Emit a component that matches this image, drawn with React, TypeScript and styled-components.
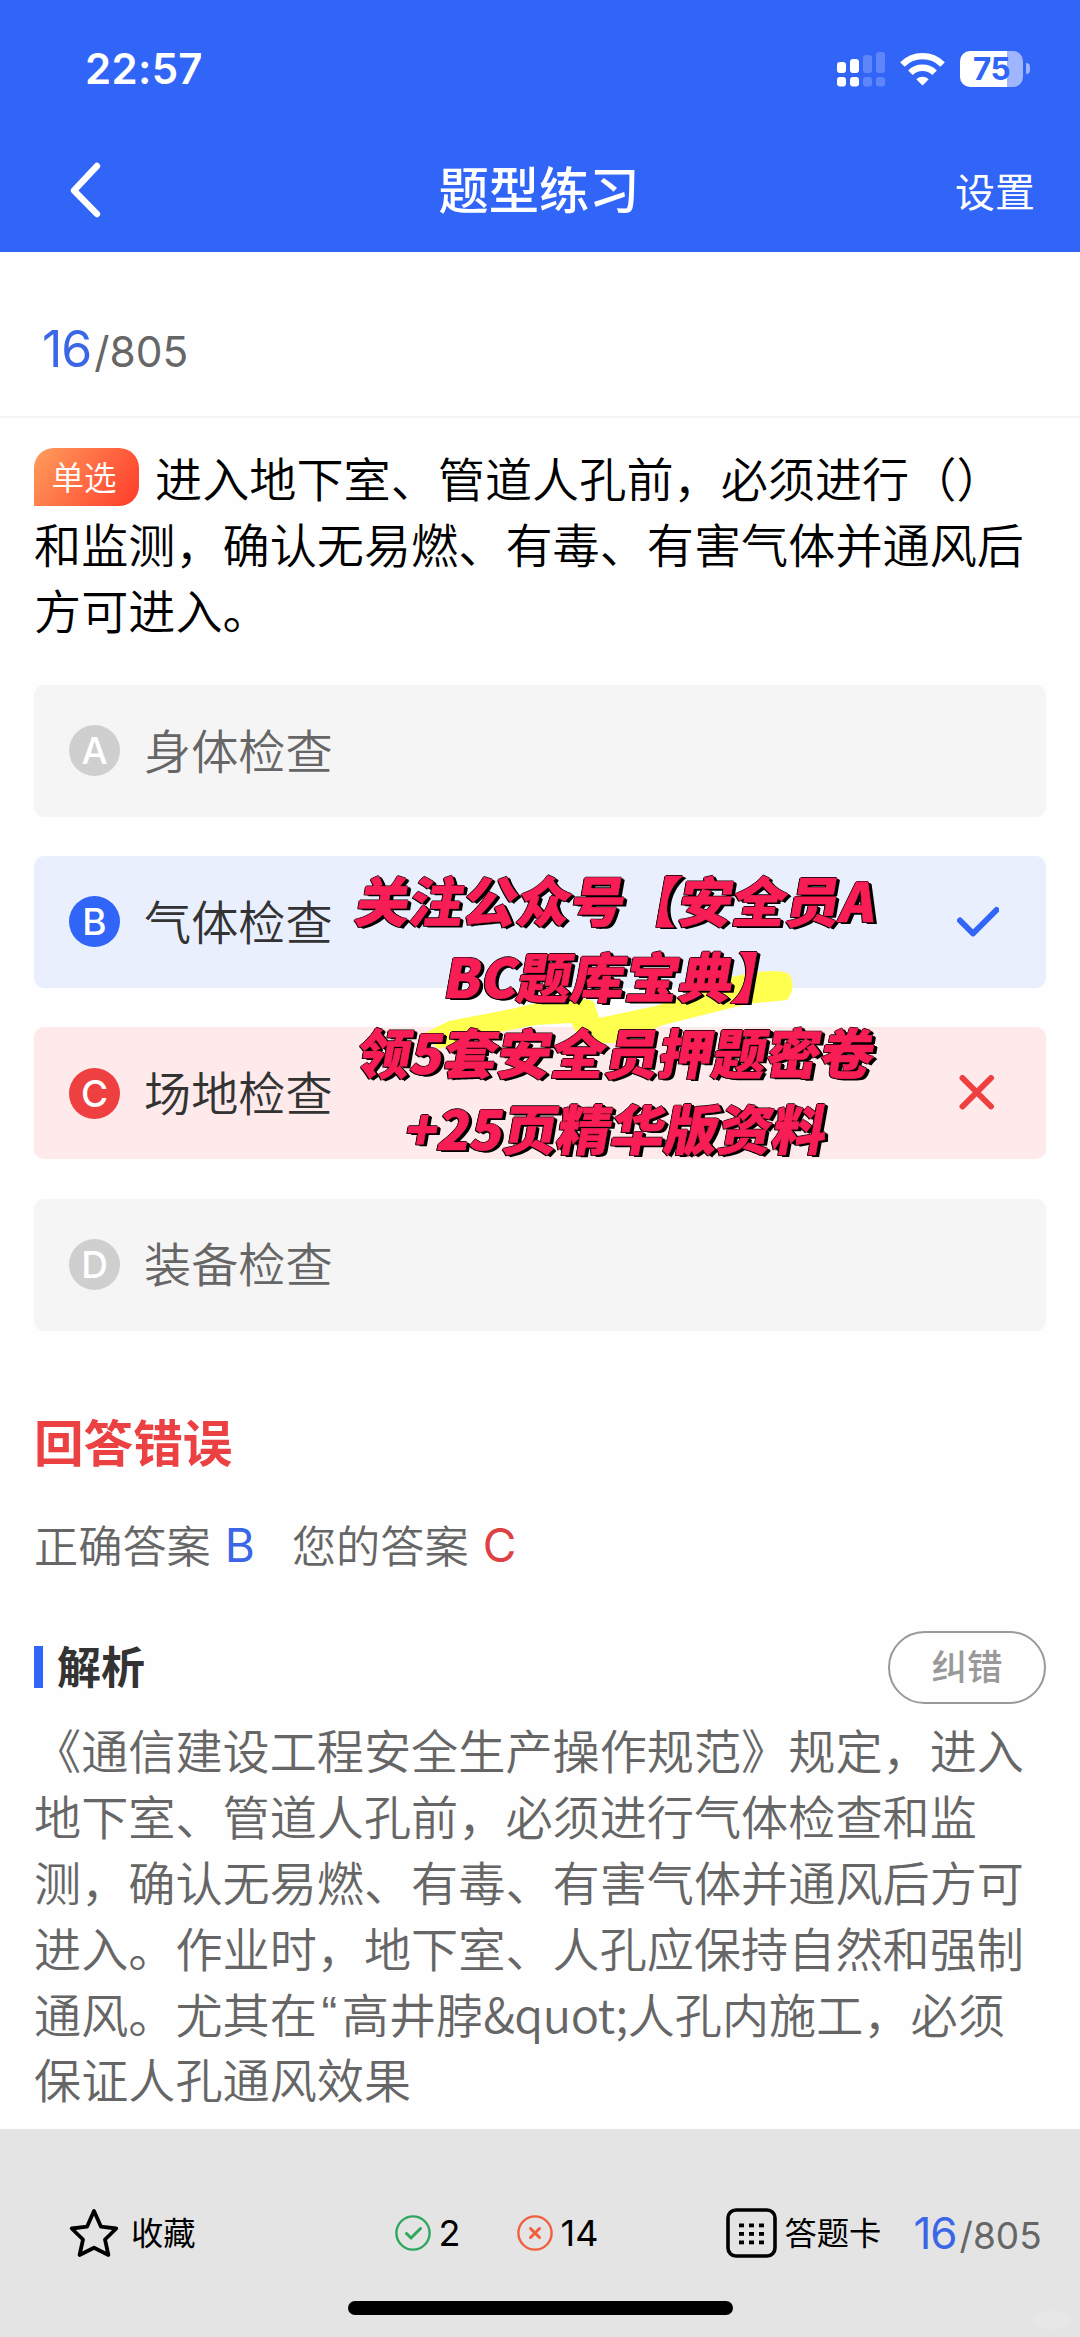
import React from 'react';
import styled, { createGlobalStyle, css } from 'styled-components';

const latin = `Inter, "Noto Sans CJK SC", sans-serif`;
const cjk = `"Noto Sans CJK SC", sans-serif`;
const blue = '#3165f7';
const red = '#ee3f41';

const GlobalStyle = createGlobalStyle`
  *, *::before, *::after { box-sizing: border-box; }
  body { margin: 0; background: #fff; }
  button { font: inherit; background: none; border: 0; padding: 0; color: inherit; }
  svg { display: block; flex: none; }
`;

const Screen = styled.div`
  width: 1080px;
  height: 2337px;
  display: flex;
  flex-direction: column;
  overflow: hidden;
  background: #fefefe;
  font-family: ${cjk};
  color: #000;
`;

const Header = styled.header`
  height: 252px;
  flex: none;
  background: ${blue};
  color: #fff;
`;

const StatusBar = styled.div`
  height: 137px;
  padding: 0 50px 0 85px;
  display: flex;
  align-items: center;
  justify-content: space-between;
`;

const Clock = styled.span`
  font: 600 42px/1 ${latin};
  letter-spacing: 0.3px;
`;

const StatusIcons = styled.div`
  display: flex;
  align-items: center;
  gap: 15px;
`;

const BatteryWrap = styled.div`
  display: flex;
  align-items: center;
  gap: 3px;
`;

const Battery = styled.div`
  width: 63px;
  height: 36px;
  border-radius: 10px;
  display: flex;
  align-items: center;
  justify-content: center;
  background: linear-gradient(to right, #fff 75%, #9fb5fd 75%);
  color: ${blue};
  font: 700 31.5px/1 ${latin};
  letter-spacing: -0.5px;
`;

const BatteryNub = styled.i`
  width: 4px;
  height: 11px;
  border-radius: 0 5px 5px 0;
  background: #9fb5fd;
`;

const NavBar = styled.nav`
  height: 106px;
  padding: 0 45px 0 70px;
  display: grid;
  grid-template-columns: 1fr auto 1fr;
  align-items: center;
`;

const NavTitle = styled.h1`
  margin: 0 27px 6px 0;
  font: 500 50.3px/1 ${cjk};
`;

const NavAction = styled.button`
  justify-self: end;
  font: 400 40px/1 ${cjk};
`;

const Counter = styled.div<{ $big: number; $small: number }>`
  display: flex;
  align-items: baseline;
  gap: 3px;
  font: 400 ${p => p.$small}px/1 ${latin};
  color: #666;
  b {
    font-weight: 400;
    font-size: ${p => p.$big}px;
    letter-spacing: -1px;
    color: #3b66e6;
  }
`;

const ProgressRow = styled.div`
  height: 166px;
  flex: none;
  padding: 72px 42px 0;
  border-bottom: 2px solid #f4f4f4;
`;

const Main = styled.main`
  flex: 1;
  padding: 26px 34px 0;
`;

const Line = styled.span`
  display: flex;
  align-items: center;
  height: 65.9px;
  white-space: nowrap;
`;

const Question = styled.p`
  margin: 0;
  font-size: 47.15px;
  font-weight: 350;
`;

const TypeBadge = styled.span`
  width: 105px;
  height: 58px;
  margin-right: 16px;
  padding: 0 5px 2px 0;
  display: flex;
  align-items: center;
  justify-content: center;
  border-radius: 20px 20px 20px 0;
  background: linear-gradient(125deg, #ff9d5c, #ff452f 90%);
  color: #fff;
  font-size: 32.5px;
`;

const Options = styled.div`
  position: relative;
  margin-top: 43px;
  display: flex;
  flex-direction: column;
  gap: 39.3px;
`;

type State = 'idle' | 'right' | 'wrong';
const cardBg = { idle: '#f5f5f5', right: '#eaeffe', wrong: '#feeaea' };
const dotBg = { idle: '#d0cfd0', right: blue, wrong: red };

const OptionCard = styled.div<{ $state: State }>`
  height: 132px;
  padding: 0 47px 0 35px;
  border-radius: 10px;
  display: flex;
  align-items: center;
  background: ${p => cardBg[p.$state]};
  color: ${p => (p.$state === 'idle' ? '#666' : '#333')};
  font-size: 47.15px;
  font-weight: 350;
  line-height: 1;
`;

const Letter = styled.span<{ $state: State }>`
  width: 51px;
  height: 51px;
  margin-right: 24px;
  border-radius: 50%;
  display: flex;
  align-items: center;
  justify-content: center;
  background: ${p => dotBg[p.$state]};
  color: #fff;
  font: 500 37px/1 ${latin};
`;

const OptionText = styled.span`
  flex: 1;
  padding-bottom: 5px;
`;

const Promo = styled.div`
  position: absolute;
  left: 303px;
  top: 176px;
  width: 560px;
  color: #f81e55;
  text-align: center;
`;

const Highlight = styled.svg`
  position: absolute;
  left: 86px;
  top: 106px;
`;

const PromoLine = styled.div`
  position: relative;
  height: 76px;
  white-space: nowrap;
  font: 900 53.8px/76px ${cjk};
  transform: skewX(-10deg);
  -webkit-text-stroke: 0.6px #f81e55;
  text-shadow: -1px 0 0 #000, 0 -1px 0 #000, 0 1px 0 #000, 1px 0 0 #000,
    -1px 1px 0 #000, 2px 1px 0 #000, 3px 1px 0 #000, 4px 2px 0 #000;
`;

const Verdict = styled.h2`
  margin: 80px 0 0 0;
  font: 700 49.6px/58px ${cjk};
  color: #eb4143;
`;

const Answers = styled.div`
  height: 60px;
  margin-top: 45px;
  display: flex;
  align-items: center;
  font-size: 44.2px;
  font-weight: 350;
  color: #666;
`;

const Answer = styled.span<{ $color: string }>`
  display: flex;
  align-items: center;
  margin-right: 37px;
  em {
    margin-left: 14px;
    padding-top: 2px;
    font: 400 46px/1 ${latin};
    color: ${p => p.$color};
  }
`;

const SectionHead = styled.div`
  height: 73px;
  margin-top: 57px;
  display: flex;
  align-items: center;
  justify-content: space-between;
`;

const SectionTitle = styled.h3`
  margin: 0;
  display: flex;
  align-items: center;
  gap: 14px;
  font: 600 44px/1 ${cjk};
  color: #333;
  &::before {
    content: '';
    width: 9px;
    height: 42px;
    background: ${blue};
  }
  span {
    padding-bottom: 4px;
  }
`;

const ReportButton = styled.button`
  width: 158px;
  height: 73px;
  padding-bottom: 4px;
  border: 2.6px solid #999;
  border-radius: 37px;
  font: 500 35.5px/1 ${cjk};
  color: #999;
`;

const Explanation = styled.p`
  margin: 12px 0 0;
  font-size: 47.15px;
  font-weight: 350;
  color: #666;
`;

const Quote = styled.span`
  width: 25px;
  text-align: center;
  font-family: "Liberation Sans", sans-serif;
`;

const Entity = styled.span`
  letter-spacing: -0.5px;
`;

const Footer = styled.footer`
  position: relative;
  height: 208px;
  flex: none;
  padding: 66px 38px 0 69px;
  background: #e4e4e4;
`;

const FooterRow = styled.div`
  height: 76px;
  display: flex;
  align-items: center;
  white-space: nowrap;
`;

const FooterItem = styled.div<{ $gap: number; $after: number; $num?: boolean }>`
  flex: none;
  display: flex;
  align-items: center;
  gap: ${p => p.$gap}px;
  margin-right: ${p => p.$after}px;
  line-height: 1;
  ${p =>
    p.$num
      ? css`
          font-family: ${latin};
          font-size: 36px;
        `
      : css`
          font-size: 32.3px;
        `}
`;

const FooterLabel = styled.span`
  padding-bottom: 3px;
`;

const HomeIndicator = styled.i`
  position: absolute;
  left: 348px;
  bottom: 22px;
  width: 385px;
  height: 14px;
  border-radius: 7px;
  background: #000;
`;

const Stamp = styled.i`
  position: absolute;
  right: 9px;
  bottom: 8px;
  width: 37px;
  height: 18px;
  border-radius: 9px;
  background: #e7e7e7;
`;

const Signal = () => (
  <svg width="48" height="36" viewBox="0 0 48 36" fill="#fff">
    <rect x="0" y="11" width="9" height="11" rx="3" />
    <rect x="13" y="8" width="9" height="14" rx="3" />
    <rect x="26" y="4" width="9" height="18" rx="3" opacity=".22" />
    <rect x="39" y="1" width="9" height="21" rx="3" opacity=".22" />
    <rect x="0" y="26" width="9" height="9.5" rx="3" />
    <rect x="13" y="26" width="9" height="9.5" rx="3" />
    <rect x="26" y="26" width="9" height="9.5" rx="3" opacity=".22" />
    <rect x="39" y="26" width="9" height="9.5" rx="3" opacity=".22" />
  </svg>
);

const Wifi = () => (
  <svg width="45" height="34" viewBox="0 0 45 34" fill="none" stroke="#fff" strokeWidth="6.4">
    <path d="M2.4 12.4a28.5 28.5 0 0 1 40.2 0" />
    <path d="M10.4 20.8a17.1 17.1 0 0 1 24.2 0" />
    <path d="M22.5 33.6l-6.2-6.3a9 9 0 0 1 12.4 0z" fill="#fff" stroke="none" />
  </svg>
);

const Back = () => (
  <svg width="32" height="56" viewBox="0 0 32 56" fill="none" stroke="#fff" strokeWidth="6.4" strokeLinecap="round">
    <path d="M27 4L4 28.5 27 52" strokeLinejoin="round" />
  </svg>
);

const Check = () => (
  <svg width="42" height="34" viewBox="0 0 42 34" fill="none" stroke={blue} strokeWidth="6" strokeLinecap="round" strokeLinejoin="round">
    <path d="M3 15.5l13 13L39.5 5" />
  </svg>
);

const Cross = () => (
  <svg width="42" height="36" viewBox="0 0 42 36" fill="none" stroke={red} strokeWidth="6" strokeLinecap="round">
    <path d="M5.5 3l28.5 28.5M34 3L5.5 31.5" />
  </svg>
);

const Star = () => (
  <svg width="50" height="50" viewBox="0 0 50 50" fill="none" stroke="#000" strokeWidth="3.8" strokeLinejoin="round">
    <path d="M25 3l7 15.7L47.3 20.5 36 31.5 39.4 47 25 39.7 10.6 47 14 31.5 2.7 20.5 18 18.7z" />
  </svg>
);

const RoundMark = ({ color, d }: { color: string; d: string }) => (
  <svg width="36" height="36" viewBox="0 0 36 36" fill="none" stroke={color} strokeWidth="2.4" strokeLinecap="round">
    <circle cx="18" cy="18" r="16.6" />
    <path d={d} strokeWidth="3" />
  </svg>
);

const SheetIcon = () => (
  <svg width="51" height="50" viewBox="0 0 51 50">
    <rect x="2" y="2" width="47" height="46" rx="8" fill="none" stroke="#000" strokeWidth="3.6" />
    {[15.5, 24, 32.5].map(y =>
      [13, 23, 33].map(x => <rect key={`${x}-${y}`} x={x} y={y} width="5" height="3.8" />)
    )}
  </svg>
);

const options: { letter: string; text: string; state: State }[] = [
  { letter: 'A', text: '身体检查', state: 'idle' },
  { letter: 'B', text: '气体检查', state: 'right' },
  { letter: 'C', text: '场地检查', state: 'wrong' },
  { letter: 'D', text: '装备检查', state: 'idle' },
];

const promo = ['关注公众号【安全员A', 'BC题库宝典】', '领5套安全员押题密卷', '+25页精华版资料'];

export default function App() {
  return (
    <Screen>
      <GlobalStyle />
      <Header>
        <StatusBar>
          <Clock>22:57</Clock>
          <StatusIcons>
            <Signal />
            <Wifi />
            <BatteryWrap>
              <Battery>75</Battery>
              <BatteryNub />
            </BatteryWrap>
          </StatusIcons>
        </StatusBar>
        <NavBar>
          <Back />
          <NavTitle>题型练习</NavTitle>
          <NavAction>设置</NavAction>
        </NavBar>
      </Header>

      <ProgressRow>
        <Counter $big={50} $small={42.4}>
          <b>16</b>/805
        </Counter>
      </ProgressRow>

      <Main>
        <Question>
          <Line>
            <TypeBadge>单选</TypeBadge>进入地下室、管道人孔前，必须进行（）
          </Line>
          <Line>和监测，确认无易燃、有毒、有害气体并通风后</Line>
          <Line>方可进入。</Line>
        </Question>

        <Options>
          {options.map(o => (
            <OptionCard key={o.letter} $state={o.state}>
              <Letter $state={o.state}>{o.letter}</Letter>
              <OptionText>{o.text}</OptionText>
              {o.state === 'right' && <Check />}
              {o.state === 'wrong' && <Cross />}
            </OptionCard>
          ))}
          <Promo>
            <Highlight width="376" height="90" viewBox="0 0 376 90">
              <path
                fill="#ffff50"
                d="M2 66L26 54 88 42 124 34Q160 28 171 35L176 51 233 39 309 10Q350 0 366 7 374 20 364 33L324 37 240 58 197 76 160 76 148 56 113 58 60 68 15 82z"
              />
            </Highlight>
            {promo.map(t => (
              <PromoLine key={t}>{t}</PromoLine>
            ))}
          </Promo>
        </Options>

        <Verdict>回答错误</Verdict>
        <Answers>
          <Answer $color="#3b66e6">
            正确答案<em>B</em>
          </Answer>
          <Answer $color="#de4144">
            您的答案<em>C</em>
          </Answer>
        </Answers>

        <SectionHead>
          <SectionTitle>
            <span>解析</span>
          </SectionTitle>
          <ReportButton>纠错</ReportButton>
        </SectionHead>
        <Explanation>
          <Line>《通信建设工程安全生产操作规范》规定，进入</Line>
          <Line>地下室、管道人孔前，必须进行气体检查和监</Line>
          <Line>测，确认无易燃、有毒、有害气体并通风后方可</Line>
          <Line>进入。作业时，地下室、人孔应保持自然和强制</Line>
          <Line>
            通风。尤其在<Quote>“</Quote>高井脖<Entity>&amp;quot;</Entity>人孔内施工，必须
          </Line>
          <Line>保证人孔通风效果</Line>
        </Explanation>
      </Main>

      <Footer>
        <FooterRow>
          <FooterItem $gap={12} $after={199}>
            <Star />
            <FooterLabel>收藏</FooterLabel>
          </FooterItem>
          <FooterItem $gap={8} $after={56} $num>
            <RoundMark color="#2fa75d" d="M11.5 18.5l4.5 4.5 9.5-9.5" />2
          </FooterItem>
          <FooterItem $gap={8} $after={128} $num>
            <RoundMark color="#f0603f" d="M13.5 13.5l9 9M22.5 13.5l-9 9" />
            14
          </FooterItem>
          <FooterItem $gap={7} $after={32}>
            <SheetIcon />
            <FooterLabel>答题卡</FooterLabel>
          </FooterItem>
          <Counter $big={44} $small={37}>
            <b>16</b>/805
          </Counter>
        </FooterRow>
        <HomeIndicator />
        <Stamp />
      </Footer>
    </Screen>
  );
}
